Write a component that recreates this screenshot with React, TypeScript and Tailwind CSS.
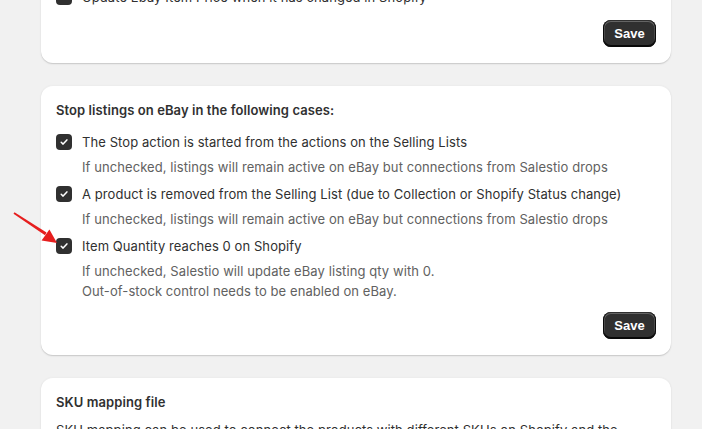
import React from "react";

const textFont = { fontFamily: "Inter, 'Noto Sans', sans-serif" };

function CheckBox() {
  return (
    <span className="inline-flex h-4 w-4 shrink-0 items-center justify-center rounded-[4px] bg-[#303030]">
      <svg width="10" height="10" viewBox="0 0 10 10" fill="none">
        <path d="M2.2 5.3 4.1 7.1 7.9 2.9" stroke="#fff" strokeWidth="1.5" strokeLinecap="round" strokeLinejoin="round" />
      </svg>
    </span>
  );
}

function SaveButton() {
  return (
    <button
      type="button"
      className="h-[27px] w-[53px] rounded-[8px] bg-[#303030] text-[13px] font-bold text-white shadow-[inset_0_-1px_0_1px_rgba(0,0,0,0.8),inset_0_0_0_1px_#303030,inset_0_0.5px_0_1.5px_rgba(255,255,255,0.25)]"
      style={{ fontFamily: "'Liberation Sans', Arial, sans-serif" }}
    >
      Save
    </button>
  );
}

function Option({ label, help }: { label: string; help?: string[] }) {
  return (
    <div>
      <label className="flex items-center gap-[10px] text-[13px] leading-5 tracking-[0.08px] text-[#303030]">
        <CheckBox />
        <span>{label}</span>
      </label>
      {help ? (
        <div className="mt-[5px] pl-[26px] text-[13px] leading-5 tracking-[0.08px] text-[#616161]">
          {help.map((line) => (
            <p key={line}>{line}</p>
          ))}
        </div>
      ) : null}
    </div>
  );
}

function Card({ children, className = "" }: { children: React.ReactNode; className?: string }) {
  return (
    <section
      className={
        "w-[630px] rounded-[12px] bg-white px-[15px] shadow-[0_1px_0_0_rgba(26,26,26,0.07),0_1px_2px_rgba(0,0,0,0.12),inset_0_1px_0_0_rgba(204,204,204,0.35)] " +
        className
      }
    >
      {children}
    </section>
  );
}

export default function App() {
  const stopHelp = "If unchecked, listings will remain active on eBay but connections from Salestio drops";
  return (
    <div className="relative h-[429px] w-[702px] overflow-hidden bg-[#f1f1f1]" style={textFont}>
      <div className="ml-[41px] mt-[-29px] flex flex-col gap-[22px]">
        <Card className="pb-4 pt-4">
          <Option label="Update Ebay Item Price when it has changed in Shopify" />
          <div className="mt-[13px] flex justify-end">
            <SaveButton />
          </div>
        </Card>

        <Card className="pb-4 pt-[15px]">
          <h2 className="text-[13px] font-semibold leading-5 tracking-[0.08px] text-[#303030]">
            Stop listings on eBay in the following cases:
          </h2>
          <div className="mt-3 flex flex-col gap-[7px]">
            <Option label="The Stop action is started from the actions on the Selling Lists" help={[stopHelp]} />
            <Option
              label="A product is removed from the Selling List (due to Collection or Shopify Status change)"
              help={[stopHelp]}
            />
            <Option
              label="Item Quantity reaches 0 on Shopify"
              help={[
                "If unchecked, Salestio will update eBay listing qty with 0.",
                "Out-of-stock control needs to be enabled on eBay.",
              ]}
            />
          </div>
          <div className="mt-[11px] flex justify-end">
            <SaveButton />
          </div>
        </Card>

        <Card className="pb-4 pt-[15px]">
          <h2 className="text-[13px] font-semibold leading-5 tracking-[0.08px] text-[#303030]">SKU mapping file</h2>
          <p className="mt-2 text-[13px] leading-5 tracking-[0.08px] text-[#303030]">
            SKU mapping can be used to connect the products with different SKUs on Shopify and the
            <br />
            eBay listings.
          </p>
        </Card>
      </div>

      <svg className="pointer-events-none absolute left-0 top-0" width="80" height="260" viewBox="0 0 80 260">
        <polygon points="13.5,213.8 14.5,212.2 46.5,232.6 45,235.2" fill="#e61e1e" />
        <polygon points="57,243 41.6,240.4 49.4,229.6" fill="#e61e1e" />
      </svg>
    </div>
  );
}
